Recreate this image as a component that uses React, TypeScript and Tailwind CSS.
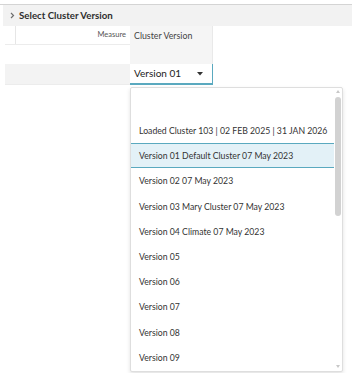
import React from "react";

const options = [
  "Loaded Cluster 103 | 02 FEB 2025 | 31 JAN 2026",
  "Version 01 Default Cluster 07 May 2023",
  "Version 02 07 May 2023",
  "Version 03 Mary Cluster 07 May 2023",
  "Version 04 Climate 07 May 2023",
  "Version 05",
  "Version 06",
  "Version 07",
  "Version 08",
  "Version 09",
];

const selected = 1;

function Dropdown() {
  return (
    <div className="absolute left-[130px] top-[87px] flex h-[285px] w-[213px] overflow-hidden rounded-[2px] border border-[#dedede] bg-white shadow-[0_2px_4px_rgba(0,0,0,0.12)]">
      <div className="flex flex-1 flex-col pt-[5px]">
        <div className="h-[25px] shrink-0" />
        {options.map((opt, i) => (
          <div
            key={opt}
            className={
              i === selected
                ? "flex h-[25.2px] shrink-0 items-center whitespace-nowrap border-y border-[#5aa9bf] bg-[#e3f1f7] pl-[8px] text-[8.7px] text-[#333]"
                : "flex h-[25.2px] shrink-0 items-center whitespace-nowrap pl-[8px] text-[8.7px] text-[#333]"
            }
          >
            {opt}
          </div>
        ))}
      </div>
      <div className="flex w-[8px] shrink-0 flex-col items-center pt-[2px]">
        <div className="h-0 w-0 border-x-[2.5px] border-b-[3px] border-x-transparent border-b-[#c8c8c8]" />
        <div className="mt-[4px] h-[119px] w-[6px] rounded-[3px] bg-[#d2d2d2]" />
        <div className="flex-1" />
        <div className="mb-[3px] h-0 w-0 border-x-[2.5px] border-t-[3px] border-x-transparent border-t-[#c8c8c8]" />
      </div>
    </div>
  );
}

export default function App() {
  return (
    <div
      className="relative h-[373px] w-[352px] overflow-hidden bg-white text-[#333]"
      style={{ fontFamily: "Lato, 'Noto Sans', sans-serif" }}
    >
      <div className="mt-[4px] border-t border-[#d4d4d4]">
        <div className="ml-[3px] flex h-[21px] items-center gap-[4px] bg-[#f2f2f2] pl-[7px]">
          <svg width="5" height="7" viewBox="0 0 5 7">
            <path d="M1 1 L3.5 3.5 L1 6" fill="none" stroke="#6f6f6f" strokeWidth="1.2" />
          </svg>
          <span className="text-[9.7px] font-bold text-[#2e2e2e]">Select Cluster Version</span>
        </div>
      </div>
      <div className="flex">
        <div className="flex w-[130px] flex-col">
          <div className="ml-[5px] flex h-[19px] border-b border-[#ececec]">
            <div className="w-[11px] border-r border-[#e6e6e6]" />
            <div className="flex flex-1 items-center justify-end pr-[4px] text-[7.5px] text-[#555]">
              Measure
            </div>
          </div>
          <div className="h-[19px]" />
        </div>
        <div className="h-[38px] w-[83px] border-r border-[#e9e9e9] bg-[#f5f5f5] px-[4px] pt-[3px] text-[8.8px] text-[#444]">
          Cluster Version
        </div>
      </div>
      <div className="flex h-[21px]">
        <div className="ml-[5px] w-[125px] border-b border-[#ececec] bg-[#f3f3f3]" />
        <div className="flex w-[83px] items-center justify-between border-r border-b-2 border-[#5aa9bf] bg-white pl-[4px] pr-[9px] text-[10px] text-[#222]">
          <span>Version 01</span>
          <svg width="6" height="4" viewBox="0 0 6 4">
            <path d="M0 0 L6 0 L3 3.5 Z" fill="#333" />
          </svg>
        </div>
      </div>
      <Dropdown />
    </div>
  );
}
